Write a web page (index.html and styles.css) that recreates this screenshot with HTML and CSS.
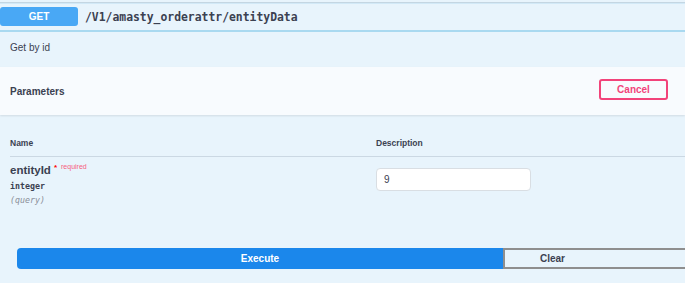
FILE: index.html
```html
<!DOCTYPE html>
<html>
<head>
<meta charset="utf-8">
<link rel="stylesheet" href="styles.css">
</head>
<body>
<div class="opblock">
  <div class="summary">
    <span class="method">GET</span>
    <span class="path">/V1/amasty_orderattr/entityData</span>
  </div>
  <div class="desc">Get by id</div>
  <div class="params-head">
    <span class="params-title">Parameters</span>
    <button class="cancel">Cancel</button>
  </div>
  <div class="table">
    <div class="thead">
      <span class="col-name">Name</span>
      <span class="col-desc">Description</span>
    </div>
    <div class="trow">
      <div class="col-name">
        <div class="pname">entityId<span class="star">*</span><span class="req">required</span></div>
        <div class="ptype">integer</div>
        <div class="pin">(query)</div>
      </div>
      <div class="col-desc">
        <div class="input">9</div>
      </div>
    </div>
  </div>
  <div class="exec-wrap">
    <button class="execute">Execute</button><button class="clear">Clear</button>
  </div>
</div>
</body>
</html>
```
FILE: styles.css
```css
html, body {
  margin: 0;
  padding: 0;
}
body {
  background: #e8f4fc;
  width: 685px;
  height: 283px;
  overflow: hidden;
  font-family: "Liberation Sans", Arial, sans-serif;
  color: #3b4151;
}
.opblock {
  margin-top: 2px;
  border-top: 1px solid #c4d6e2;
}
.summary {
  display: flex;
  align-items: center;
  border-top: 1px solid #d2e9f7;
  border-bottom: 2px solid #a9d9f0;
  padding: 3px 0 4px 0;
}
.method {
  width: 78px;
  height: 19px;
  background: #49a8f5;
  border-radius: 3px;
  color: #fff;
  font-weight: bold;
  font-size: 10px;
  line-height: 19px;
  text-align: center;
}
.path {
  margin-left: 7px;
  font-family: "DejaVu Sans Mono", monospace;
  font-weight: bold;
  font-size: 11.4px;
  color: #3b4151;
}
.desc {
  font-size: 10px;
  line-height: 14px;
  padding: 9px 10px 12px 10px;
}
.params-head {
  display: flex;
  align-items: center;
  justify-content: space-between;
  height: 48px;
  padding: 0 17px 0 10px;
  background: #f8fbfe;
  box-shadow: 0 1px 2px rgba(0, 0, 0, 0.1);
}
.params-title {
  font-weight: bold;
  font-size: 10px;
}
.cancel {
  width: 69px;
  height: 21px;
  margin-top: -3px;
  background: transparent;
  border: 2px solid #f2437a;
  border-radius: 3px;
  color: #f2437a;
  font-family: "Liberation Sans", Arial, sans-serif;
  font-weight: bold;
  font-size: 10px;
  padding: 0;
}
.table {
  padding-left: 10px;
}
.thead, .trow {
  display: grid;
  grid-template-columns: 366px 1fr;
}
.thead {
  font-weight: bold;
  font-size: 8.5px;
  line-height: 12px;
  padding: 22px 0 7px 0;
  border-bottom: 1px solid #cbd8e3;
}
.trow {
  padding-top: 6px;
}
.pname {
  font-size: 11.5px;
  line-height: 15px;
  font-weight: bold;
}
.star {
  color: #f00;
  font-size: 8px;
  position: relative;
  top: -4px;
  margin-left: 3px;
}
.req {
  color: #f7607f;
  font-size: 7px;
  font-weight: normal;
  position: relative;
  top: -5px;
  margin-left: 4px;
}
.ptype {
  font-family: "DejaVu Sans Mono", monospace;
  font-weight: bold;
  font-size: 8.3px;
  line-height: 14px;
}
.pin {
  font-family: "DejaVu Sans Mono", monospace;
  font-style: italic;
  font-size: 8.3px;
  line-height: 14px;
  color: #8b8f99;
}
.input {
  margin-top: 5px;
  width: 146px;
  height: 21px;
  background: #fff;
  border: 1px solid #d9dee3;
  border-radius: 4px;
  font-size: 10px;
  line-height: 21px;
  padding-left: 7px;
  color: #3b4151;
}
.exec-wrap {
  display: flex;
  padding: 41px 0 0 17px;
}
.execute {
  width: 486px;
  flex: none;
  height: 21px;
  background: #1b87eb;
  border: none;
  border-radius: 4px 0 0 4px;
  color: #fff;
  font-family: "Liberation Sans", Arial, sans-serif;
  font-weight: bold;
  font-size: 10px;
  padding: 0;
}
.clear {
  flex: 1;
  height: 21px;
  background: transparent;
  border: 2px solid #8e8e8e;
  border-right: none;
  border-radius: 0;
  color: #3b4151;
  font-family: "Liberation Sans", Arial, sans-serif;
  font-weight: bold;
  font-size: 10px;
  text-align: left;
  padding: 0 0 0 35px;
}
```
